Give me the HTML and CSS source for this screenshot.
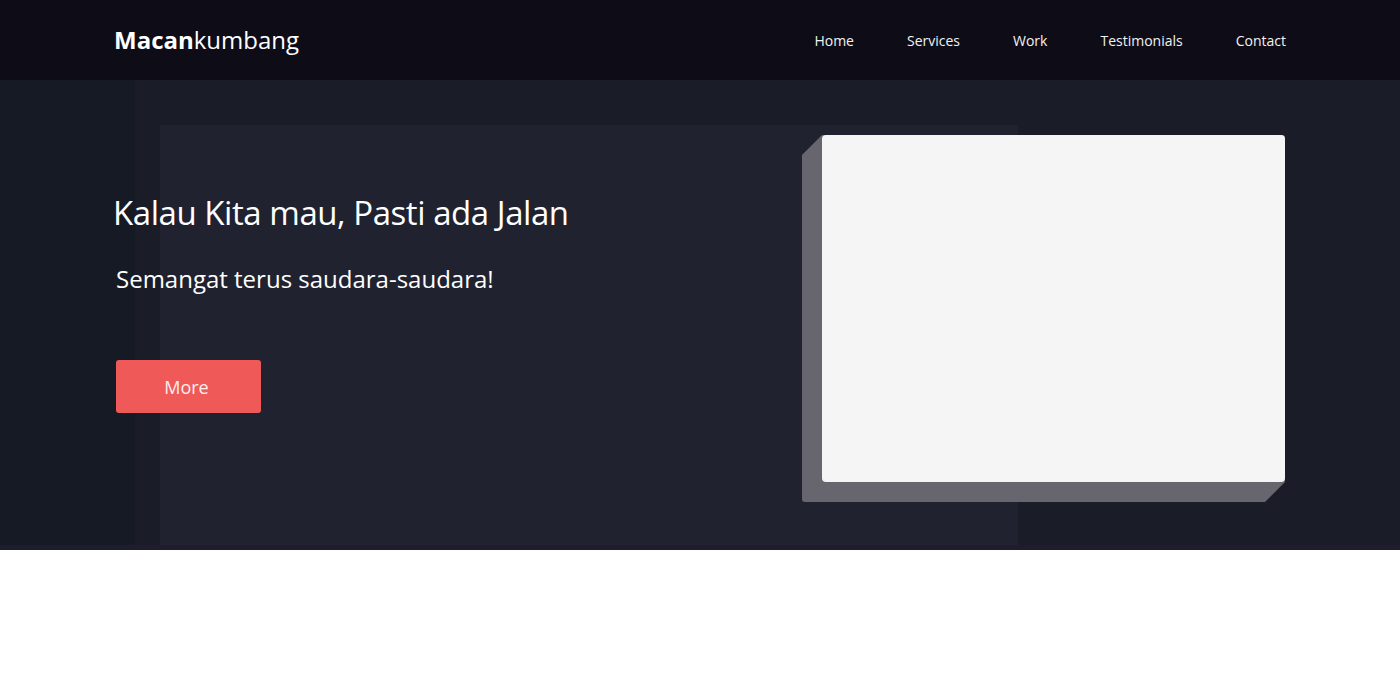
FILE: index.html
```html
<!DOCTYPE html>
<html lang="id">
<head>
<meta charset="utf-8">
<title>Macankumbang</title>
<link rel="stylesheet" href="styles.css">
</head>
<body>
<header class="topbar">
  <div class="container bar-inner">
    <a class="logo" href="#"><b>Macan</b>kumbang</a>
    <nav class="nav">
      <a href="#">Home</a>
      <a href="#">Services</a>
      <a href="#">Work</a>
      <a href="#">Testimonials</a>
      <a href="#">Contact</a>
    </nav>
  </div>
</header>
<section class="hero">
  <div class="panel"></div>
  <div class="container hero-inner">
    <div class="hero-text">
      <h1>Kalau Kita mau, Pasti ada Jalan</h1>
      <p class="lead">Semangat terus saudara-saudara!</p>
      <a class="btn" href="#">More</a>
    </div>
    <div class="card-wrap">
      <div class="card-depth"></div>
      <div class="card"></div>
    </div>
  </div>
</section>
<section class="below"></section>
</body>
</html>
```
FILE: styles.css
```css
* { box-sizing: border-box; }
html, body { margin: 0; padding: 0; }
body {
  font-family: "Open Sans", "Noto Sans", sans-serif;
  background: #ffffff;
  color: #fff;
}
a { color: inherit; text-decoration: none; }
.container {
  width: 1172px;
  margin: 0 auto;
}
.topbar {
  background: #0e0d17;
  height: 80px;
}
.bar-inner {
  height: 80px;
  display: flex;
  align-items: center;
  justify-content: space-between;
}
.logo {
  font-size: 24px;
  color: #fff;
  font-weight: 400;
  margin-top: -1px;
}
.logo b { font-weight: 700; }
.nav {
  display: flex;
  gap: 53px;
  font-size: 14px;
  color: #f2f2f2;
}
.hero {
  position: relative;
  background: linear-gradient(90deg, #161a25 0, #161a25 135px, #1a1d28 135px, #1a1d28 100%);
  height: 470px;
  overflow: hidden;
  border-bottom: 5px solid #1f1c2d;
}
.panel {
  position: absolute;
  left: 160px;
  top: 45px;
  width: 858px;
  bottom: 0;
  background: #20232f;
}
.hero-inner {
  position: relative;
  display: flex;
  justify-content: space-between;
  height: 100%;
}
.hero-text {
  padding-top: 107px;
}
.hero-text h1 {
  margin: 0 0 0 -1px;
  font-weight: 400;
  font-size: 33px;
  letter-spacing: -0.45px;
  line-height: 52px;
}
.lead {
  margin: 24px 0 0 2px;
  font-size: 24px;
  line-height: 32px;
  letter-spacing: 0;
}
.btn {
  display: inline-flex;
  align-items: center;
  justify-content: center;
  margin: 65px 0 0 2px;
  width: 145px;
  height: 53px;
  border-radius: 3px;
  background: #ef5a58;
  font-size: 18px;
  color: #fbeeee;
  padding-right: 4px;
}
.card-wrap {
  position: relative;
  margin-top: 55px;
  width: 463px;
  height: 347px;
  margin-right: 1px;
}
.card-depth {
  position: absolute;
  left: -20px;
  top: 0;
  width: 483px;
  height: 367px;
  background: #67666f;
  border-radius: 3px;
  clip-path: polygon(20px 0, 100% 0, 100% 347px, 463px 367px, 0 100%, 0 20px);
}
.card {
  position: relative;
  width: 463px;
  height: 347px;
  background: #f5f5f6;
  border-radius: 4px;
}
.below {
  height: 144px;
  background: #fff;
}
```
